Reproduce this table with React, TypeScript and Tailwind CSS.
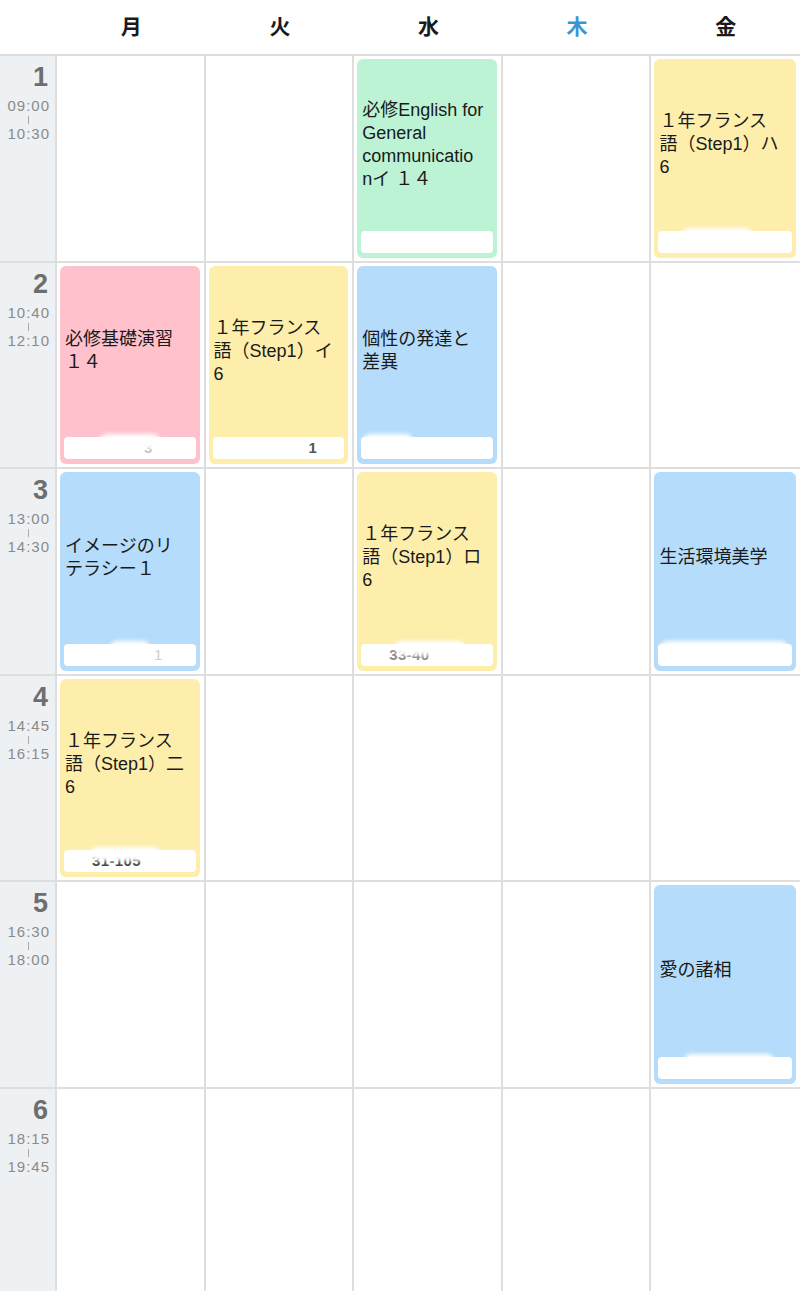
import React from 'react';

type ClassItem = {
  lines: string[];
  color: string;
  room?: string;
  roomClass?: string;
  smudge?: string;
};

const days = ['月', '火', '水', '木', '金'];

const periods = [
  { no: '1', start: '09:00', end: '10:30' },
  { no: '2', start: '10:40', end: '12:10' },
  { no: '3', start: '13:00', end: '14:30' },
  { no: '4', start: '14:45', end: '16:15' },
  { no: '5', start: '16:30', end: '18:00' },
  { no: '6', start: '18:15', end: '19:45' },
];

const green = 'bg-[#bcf3d5]';
const yellow = 'bg-[#fdeeac]';
const pink = 'bg-[#ffc1cc]';
const blue = 'bg-[#b5dcfa]';

// timetable[period][day]
const timetable: (ClassItem | null)[][] = [
  [
    null,
    null,
    { lines: ['必修English for', 'General', 'communicatio', 'nイ １４'], color: green },
    null,
    { lines: ['１年フランス', '語（Step1）ハ', '6'], color: yellow, smudge: 'left-[28px] w-[70px]' },
  ],
  [
    { lines: ['必修基礎演習', '１４'], color: pink, room: '3', roomClass: 'pl-[80px] text-[#c4c4c4]', smudge: 'left-[40px] w-[60px]' },
    { lines: ['１年フランス', '語（Step1）イ', '6'], color: yellow, room: '1', roomClass: 'pl-[96px] text-[#555]' },
    { lines: ['個性の発達と', '差異'], color: blue, smudge: 'left-[6px] w-[50px]' },
    null,
    null,
  ],
  [
    { lines: ['イメージのリ', 'テラシー１'], color: blue, room: '1', roomClass: 'pl-[90px] text-[#cfcfcf] font-normal', smudge: 'left-[50px] w-[40px]' },
    null,
    { lines: ['１年フランス', '語（Step1）ロ', '6'], color: yellow, room: '33-40', roomClass: 'pl-[28px] text-[#8a8a8a]', smudge: 'left-[38px] w-[70px]' },
    null,
    { lines: ['生活環境美学'], color: blue, smudge: 'left-[6px] w-[128px]' },
  ],
  [
    { lines: ['１年フランス', '語（Step1）二', '6'], color: yellow, room: '31-105', roomClass: 'pl-[28px] text-[#444]', smudge: 'left-[30px] w-[70px]' },
    null,
    null,
    null,
    null,
  ],
  [null, null, null, null, { lines: ['愛の諸相'], color: blue, smudge: 'left-[30px] w-[90px]' }],
  [null, null, null, null, null],
];

const ClassCard: React.FC<{ item: ClassItem }> = ({ item }) => (
  <div className={`relative flex h-full flex-col rounded-[6px] ${item.color}`}>
    <div className="flex flex-1 flex-col justify-center pl-[5px] text-[18px] leading-[23px] text-[#1a1a1a]">
      {item.lines.map((line, i) => (
        <div key={i} className="whitespace-nowrap">
          {line}
        </div>
      ))}
    </div>
    <div
      className={`mx-[4px] mb-[5px] h-[22px] rounded-[4px] bg-white text-[15px] font-bold leading-[22px] tracking-wide ${item.roomClass ?? ''}`}
    >
      {item.room}
    </div>
    {item.smudge && (
      <div className={`absolute bottom-[16px] h-[14px] rounded-full bg-white blur-[2px] ${item.smudge}`} />
    )}
  </div>
);

export default function App() {
  return (
    <div
      className="h-[1291px] w-[800px] overflow-hidden bg-white"
      style={{ fontFamily: '"Liberation Sans", "Noto Sans CJK JP", sans-serif' }}
    >
      {/* Header */}
      <div className="grid h-[56px] grid-cols-[57px_repeat(5,minmax(0,1fr))] border-b-2 border-[#dedede]">
        <div />
        {days.map((d) => (
          <div
            key={d}
            className={`flex items-center justify-center text-[21px] font-bold ${d === '木' ? 'text-[#3a95d3]' : 'text-[#1a1a1a]'}`}
          >
            {d}
          </div>
        ))}
      </div>

      {/* Periods */}
      {periods.map((p, pi) => (
        <div
          key={p.no}
          className="grid h-[206.5px] grid-cols-[57px_repeat(5,minmax(0,1fr))] border-b-2 border-[#dedede]"
        >
          <div className="flex flex-col items-end border-r-2 border-[#dedede] bg-[#eef1f4] pr-[5px] pt-[5px]">
            <div className="pr-[2px] text-[27px] font-bold leading-[32px] text-[#6e6e6e]">{p.no}</div>
            <div className="mt-[5px] flex flex-col items-center text-[15px] leading-[16px] tracking-[1px] text-[#8a8a8a]">
              <span>{p.start}</span>
              <span className="my-[2px] h-[8px] w-px bg-[#aaa]" />
              <span>{p.end}</span>
            </div>
          </div>
          {timetable[pi].map((item, di) => (
            <div
              key={di}
              className={`p-[3px] pr-[4px] ${di < 4 ? 'border-r-2 border-[#dedede]' : ''}`}
            >
              {item && <ClassCard item={item} />}
            </div>
          ))}
        </div>
      ))}
    </div>
  );
}
